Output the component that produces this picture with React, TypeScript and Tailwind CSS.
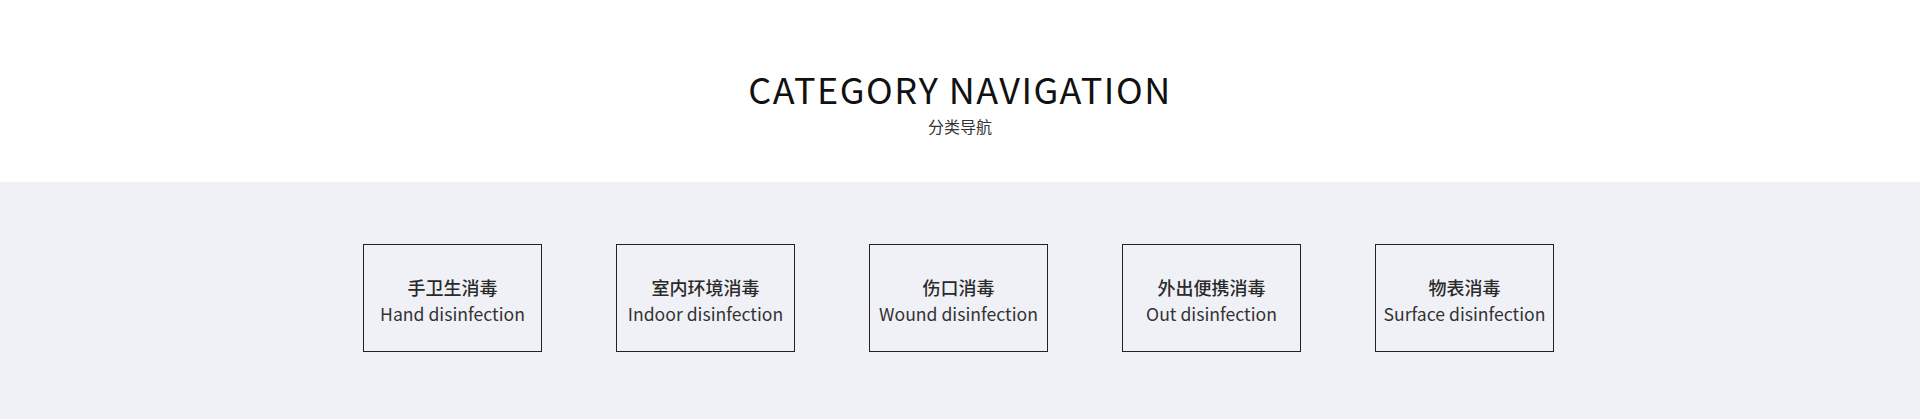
const CATEGORIES = [
  { zh: "手卫生消毒", en: "Hand disinfection" },
  { zh: "室内环境消毒", en: "Indoor disinfection" },
  { zh: "伤口消毒", en: "Wound disinfection" },
  { zh: "外出便携消毒", en: "Out disinfection" },
  { zh: "物表消毒", en: "Surface disinfection" },
]

export default function App() {
  return (
    <div className="w-full bg-white font-['Noto_Sans_CJK_SC','Noto_Sans',sans-serif]">
      {/* Heading */}
      <div className="flex h-[182px] flex-col items-center pt-[66px]">
        <h2 className="text-[36px] leading-[44px] font-normal tracking-[1.5px] text-[#111]">
          CATEGORY NAVIGATION
        </h2>
        <p className="mt-[6px] text-[16px] leading-[20px] text-[#333]">分类导航</p>
      </div>

      {/* Category boxes */}
      <div className="flex h-[237px] justify-center gap-[74px] bg-[#f0f1f6] pt-[62px] pr-[3px]">
        {CATEGORIES.map((cat) => (
          <a
            key={cat.en}
            href="#"
            className="flex h-[108px] w-[179px] flex-col items-center justify-center border border-[#222] pt-[3px] text-center"
          >
            <span className="text-[18px] leading-[28px] font-medium text-[#2a2a2a]">{cat.zh}</span>
            <span className="text-[17.6px] leading-[26px] font-normal text-[#333]">{cat.en}</span>
          </a>
        ))}
      </div>
    </div>
  )
}
